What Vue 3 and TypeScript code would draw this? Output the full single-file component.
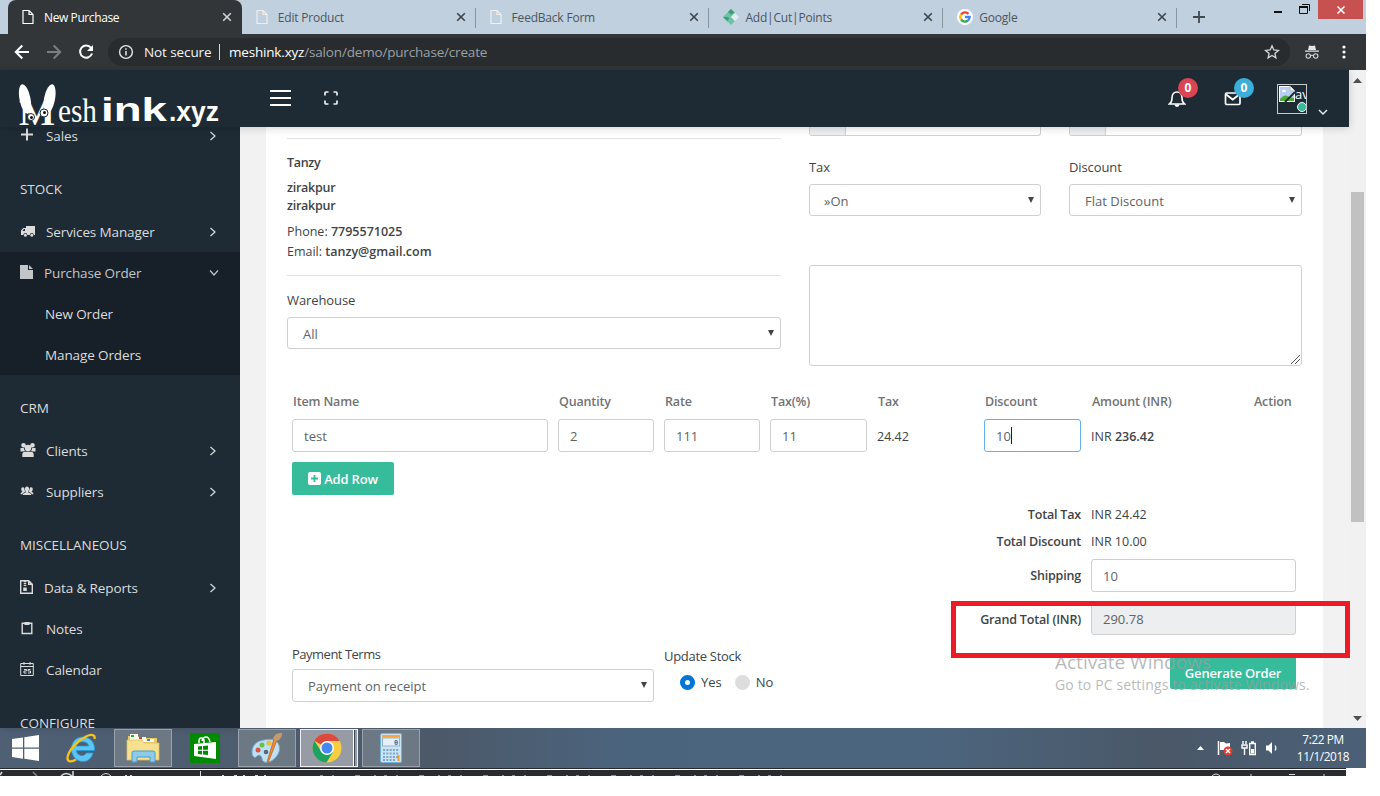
<script setup lang="ts">
import { computed, ref } from "vue";

interface Tab {
  title: string;
  icon: "page" | "diamond" | "google";
}

interface NavItem {
  label: string;
  icon: string;
  arrow?: boolean;
  tight?: boolean;
}

interface NavGroup {
  title: string;
  items: NavItem[];
}

const tabs: Tab[] = [
  { title: "New Purchase", icon: "page" },
  { title: "Edit Product", icon: "page" },
  { title: "FeedBack Form", icon: "page" },
  { title: "Add|Cut|Points", icon: "diamond" },
  { title: "Google", icon: "google" },
];

const stock: NavGroup = {
  title: "STOCK",
  items: [{ label: "Services Manager", icon: "truck", arrow: true }],
};

const groups: NavGroup[] = [
  {
    title: "CRM",
    items: [
      { label: "Clients", icon: "clients", arrow: true },
      { label: "Suppliers", icon: "suppliers", arrow: true },
    ],
  },
  {
    title: "MISCELLANEOUS",
    items: [
      { label: "Data & Reports", icon: "zip", arrow: true, tight: true },
      { label: "Notes", icon: "note" },
      { label: "Calendar", icon: "calendar" },
    ],
  },
  { title: "CONFIGURE", items: [] },
];

// Filled 16x16 glyphs of the side menu.
const glyphs: Record<string, string> = {
  plus: "M6 1.500h2v5h5v2H8v5H6v-5H1v-2h5z",
  truck:
    "M6 3h9v9h-1.200a2 2 0 0 0-4 0H7.400a2 2 0 0 0-4 0H1V7.600L3.300 5H6zM2.500 8H5V6H3.900zM5.400 10.800a1.500 1.500 0 1 1 0 3 1.500 1.500 0 0 1 0-3zm6.400 0a1.500 1.500 0 1 1 0 3 1.500 1.500 0 0 1 0-3z",
  file: "M0 1h8v5h5v9H0zM9 1l4 4H9z",
  clients:
    "M3.500 1a2.300 2.300 0 1 1 0 4.600 2.300 2.300 0 0 1 0-4.600zm9 0a2.300 2.300 0 1 1 0 4.600 2.300 2.300 0 0 1 0-4.600zM8 2.800A3.200 3.200 0 1 1 8 9.200 3.200 3.200 0 0 1 8 2.800zM.5 6h3.300c.1 1.300.6 2.300 1.300 3L3 9.400H.5zM12.200 6h3.300v3.400H13L11 9c.7-.7 1.100-1.700 1.200-3zM2.300 15v-2.500c0-1.700 1-2.800 2.700-2.800h6c1.700 0 2.700 1.100 2.700 2.800V15z",
  suppliers:
    "M7 3.500c1.300 0 2.100 1 2.100 2.400S8 8.500 8 9.200l3 1.500v1.300H3v-1.300l3-1.500c0-.7-1.100-1.800-1.100-3.300S5.700 3.500 7 3.500zM2.800 4.200c1 0 1.500.6 1.600 1.600 0 1.500.7 2.400 1 3L2.700 10.300v1H.7V9.800L2.500 9c-.5-.6-1.300-1.500-1.300-2.700S1.800 4.200 2.800 4.200zM11.200 4.200c-1 0-1.500.6-1.600 1.600 0 1.500-.7 2.400-1 3l2.700 1.500v1h2V9.800L11.500 9c.5-.6 1.300-1.500 1.300-2.700s-.6-2.100-1.600-2.100z",
};

const items = ref([{ name: "test", qty: 2, rate: 111, tax: 11, discount: 10 }]);
const shipping = ref(10);
const grandTotal = "290.78";

const taxOf = (i: { qty: number; rate: number; tax: number }) =>
  (i.qty * i.rate * i.tax) / 100;
const amountOf = (i: { qty: number; rate: number; tax: number; discount: number }) =>
  (i.qty * i.rate + taxOf(i) - i.discount).toFixed(2);

const totalTax = computed(() => items.value.reduce((s, i) => s + taxOf(i), 0).toFixed(2));
const totalDiscount = computed(() => items.value.reduce((s, i) => s + i.discount, 0).toFixed(2));
</script>

<template>
  <div class="screen">
    <!-- browser tabs -->
    <div class="tabstrip">
      <div v-for="(tab, i) in tabs" :key="tab.title" class="tab" :class="{ active: i === 0, divided: i > 0 }">
        <svg v-if="tab.icon === 'page'" class="tab-icon" width="16" height="16" viewBox="0 0 16 16">
          <path d="M1 1.500h6l4 4v9H1zM7 1.500v4h4" fill="none" :stroke="i === 0 ? '#fff' : '#f1efec'" stroke-width="1.200" />
        </svg>
        <svg v-else-if="tab.icon === 'diamond'" class="tab-icon" width="16" height="16" viewBox="0 0 16 16">
          <path d="M8 0l4 4-8 8-4-4z" fill="#6cc5a2" />
          <path d="M8 0l3.500 3.500-3.500 2L5 3z" fill="#3f9b7b" />
          <path d="M0 8h5l4 4-4 1z" fill="#3f9b7b" />
          <path d="M4 12l4-4 4 4-4 4z" fill="#6cc5a2" />
          <path d="M12 4l4 4-4 4-4-4z" fill="#e3ecf1" />
        </svg>
        <svg v-else class="tab-icon" width="16" height="16" viewBox="0 0 16 16">
          <circle cx="8" cy="8" r="8" fill="#fff" />
          <g fill="none" stroke-width="2.300">
            <path d="M4.100 5.500A4.700 4.700 0 0 1 11.500 4.900" stroke="#ea4335" />
            <path d="M4.100 5.500A4.700 4.700 0 0 0 4.100 10.500" stroke="#fbbc05" />
            <path d="M4.100 10.500A4.700 4.700 0 0 0 11 11.500" stroke="#34a853" />
            <path d="M11 11.500A4.600 4.600 0 0 0 12.700 8H8" stroke="#4285f4" />
          </g>
        </svg>
        <span class="tab-title">{{ tab.title }}</span>
        <svg class="tab-close" width="10" height="10" viewBox="0 0 10 10">
          <path d="M1.200 1.200l7.600 7.600M8.800 1.200L1.200 8.800" fill="none" stroke="currentColor" stroke-width="1.600" />
        </svg>
      </div>
      <div class="new-tab">
        <svg width="12" height="12" viewBox="0 0 12 12"><path d="M6 0v12M0 6h12" stroke="#42494f" stroke-width="1.800" /></svg>
      </div>
      <div class="win-buttons">
        <svg class="win-min" width="36" height="20" viewBox="0 0 36 20">
          <path d="M0 12h8" stroke="#111" stroke-width="2" />
          <path d="M25.500 7.500h8v6h-8zM28 4.500h7.500V11" fill="none" stroke="#111" />
          <path d="M25 7h9" stroke="#111" stroke-width="2" />
        </svg>
        <div class="win-close">
          <svg width="8" height="8" viewBox="0 0 8 8"><path d="M.5.500l7 7M7.500.500l-7 7" stroke="#fff" stroke-width="1.500" /></svg>
        </div>
      </div>
    </div>

    <!-- address bar -->
    <div class="toolbar">
      <svg class="tool" width="16" height="16" viewBox="0 0 16 16"><path d="M15 8H2M8.300 1.500L1.800 8l6.500 6.500" fill="none" stroke="#fff" stroke-width="2" /></svg>
      <svg class="tool" width="16" height="16" viewBox="0 0 16 16"><path d="M1 8h13M7.700 1.500L14.200 8l-6.500 6.500" fill="none" stroke="#7b7e81" stroke-width="2" /></svg>
      <svg class="tool" width="16" height="16" viewBox="0 0 16 16">
        <path d="M13 3.800A6.100 6.100 0 1 0 14 9.500" fill="none" stroke="#fff" stroke-width="2" />
        <path d="M15 1v6H9z" fill="#fff" />
      </svg>
      <div class="omnibox">
        <svg width="16" height="16" viewBox="0 0 16 16">
          <circle cx="8" cy="8" r="6.400" fill="none" stroke="#e6e8ea" stroke-width="1.400" />
          <path d="M8 7v4.500M8 4.300v1.500" stroke="#e6e8ea" stroke-width="1.500" />
        </svg>
        <span class="not-secure">Not secure</span>
        <span class="omni-sep"></span>
        <span class="url"><b>meshink.xyz</b>/salon/demo/purchase/create</span>
        <svg class="star" width="16" height="16" viewBox="0 0 16 16">
          <path d="M8 1.800l1.800 4.200 4.600.4-3.500 3 1 4.500L8 11.500l-3.900 2.400 1-4.500-3.500-3 4.600-.4z" fill="none" stroke="#d5d7d9" stroke-width="1.300" />
        </svg>
      </div>
      <svg class="incognito" width="14" height="14" viewBox="0 0 14 14">
        <path d="M4 .5l3 .5 3-.5L11 5H3zM0 5.500h14v1.300H0z" fill="#e3e5e6" />
        <g fill="none" stroke="#d4d6d8" stroke-width="1.100"><circle cx="3.300" cy="11" r="2.200" /><circle cx="10.700" cy="11" r="2.200" /><path d="M5.500 10.700q1.500-.9 3 0" /></g>
      </svg>
      <svg class="kebab" width="4" height="14" viewBox="0 0 4 14"><g fill="#fff"><circle cx="2" cy="2" r="1.600" /><circle cx="2" cy="7" r="1.600" /><circle cx="2" cy="12" r="1.600" /></g></svg>
    </div>

    <div class="viewport">
      <div class="page">
        <header class="navbar">
          <div class="brand">
            <svg width="205" height="48" viewBox="0 0 205 48">
              <g fill="#fff">
                <ellipse cx="7" cy="15" rx="5.500" ry="15" transform="rotate(-11 7 15)" />
                <ellipse cx="31.500" cy="15" rx="5.500" ry="15" transform="rotate(11 31.500 15)" />
                <text x="1" y="41" class="logo-m" textLength="36" lengthAdjust="spacingAndGlyphs">M</text>
                <text x="40" y="38" class="logo-esh" textLength="39" lengthAdjust="spacingAndGlyphs">esh</text>
                <text x="83" y="37" class="logo-ink" textLength="66" lengthAdjust="spacingAndGlyphs">ink</text>
                <text x="151" y="37" class="logo-xyz" textLength="50" lengthAdjust="spacingAndGlyphs">.xyz</text>
              </g>
              <circle cx="13" cy="33" r="3.500" fill="#fff" stroke="#1e2b35" /><circle cx="13.500" cy="33.500" r="1.500" fill="#111" />
              <circle cx="26" cy="29" r="4" fill="#fff" stroke="#1e2b35" /><circle cx="26.500" cy="28.500" r="1.500" fill="#111" />
            </svg>
          </div>
          <svg class="burger" width="21" height="16" viewBox="0 0 21 16"><path d="M0 1h21M0 8h21M0 15h21" stroke="#fff" stroke-width="2" /></svg>
          <svg class="expand" width="14" height="14" viewBox="0 0 14 14"><path d="M1 4.500V2q0-1 1-1h2.500M9.500 1H12q1 0 1 1v2.500M13 9.500V12q0 1-1 1H9.500M4.500 13H2q-1 0-1-1V9.500" fill="none" stroke="#eef0f1" stroke-width="1.700" /></svg>
          <div class="nav-right">
            <div class="notify">
              <svg width="18" height="18" viewBox="0 0 18 18">
                <path d="M1.500 14h15c-2-1.300-2.500-3-2.500-6 0-3.800-2-6-5-6S4 4.200 4 8c0 3-.5 4.700-2.500 6z" fill="none" stroke="#fff" stroke-width="1.600" />
                <path d="M6.500 14.500a2.500 2.500 0 0 0 5 0z" fill="#fff" />
              </svg>
              <span class="badge red">0</span>
            </div>
            <div class="notify">
              <svg width="18" height="18" viewBox="0 0 18 18">
                <rect x="1.500" y="3" width="14.500" height="11.500" rx="1.200" fill="none" stroke="#fff" stroke-width="1.700" />
                <path d="M1.500 4l7.200 5.500L16 4" fill="none" stroke="#fff" stroke-width="1.800" />
              </svg>
              <span class="badge blue">0</span>
            </div>
            <div class="avatar">
              <svg width="16" height="16" viewBox="0 0 16 16">
                <path d="M0 0h11l5 5v11H0z" fill="#fff" />
                <path d="M1 1h9.500v4.500H15V15H1z" fill="#b8cdf5" />
                <ellipse cx="5" cy="5" rx="2" ry="1.300" fill="#fff" />
                <path d="M1 15v-2q5-6 9-2l5 1v3z" fill="#4ea634" />
                <path d="M16 6L6 16" stroke="#1e2b35" stroke-width="2" />
                <path d="M11 0v5h5" fill="#fff" stroke="#888" stroke-width=".7" />
              </svg>
              <span>avatar</span>
              <i class="online"></i>
            </div>
            <svg class="chev" width="10" height="7" viewBox="0 0 10 7"><path d="M1 1l4 4 4-4" fill="none" stroke="#e5e7e9" stroke-width="1.500" /></svg>
          </div>
        </header>

        <div class="body">
          <nav class="sidebar">
            <div class="nav-list">
              <div class="nav-item">
                <svg class="nav-icon" width="16" height="16" viewBox="0 0 16 16"><path :d="glyphs.plus" /></svg>
                <span>Sales</span>
                <svg class="arrow" width="8" height="10" viewBox="0 0 8 10"><path d="M1.500 1l4.500 4-4.500 4" /></svg>
              </div>
              <div class="nav-head">{{ stock.title }}</div>
              <div v-for="item in stock.items" :key="item.label" class="nav-item">
                <svg class="nav-icon" width="16" height="16" viewBox="0 0 16 16"><path :d="glyphs[item.icon]" fill-rule="evenodd" /></svg>
                <span>{{ item.label }}</span>
                <svg class="arrow" width="8" height="10" viewBox="0 0 8 10"><path d="M1.500 1l4.500 4-4.500 4" /></svg>
              </div>
              <div class="open">
                <div class="nav-item dim tight">
                  <svg class="nav-icon" width="16" height="16" viewBox="0 0 16 16"><path :d="glyphs.file" /></svg>
                  <span>Purchase Order</span>
                  <svg class="arrow down" width="10" height="8" viewBox="0 0 10 8"><path d="M1 1.500l4 4.500 4-4.500" /></svg>
                </div>
                <div class="nav-item sub">New Order</div>
                <div class="nav-item sub">Manage Orders</div>
              </div>
              <template v-for="group in groups" :key="group.title">
                <div class="nav-head">{{ group.title }}</div>
                <div v-for="item in group.items" :key="item.label" class="nav-item" :class="{ tight: item.tight }">
                  <svg v-if="item.icon === 'zip'" class="nav-icon line" width="16" height="16" viewBox="0 0 16 16">
                    <path d="M.7 1.700h8L12.300 5.300v9H.7zM8.700 1.700v3.600h3.600" />
                    <path d="M5 2v5" stroke-width="2.500" stroke-dasharray="1.200 .8" /><path d="M5 8.500v3.500" stroke-width="3.500" />
                  </svg>
                  <svg v-else-if="item.icon === 'note'" class="nav-icon line" width="16" height="16" viewBox="0 0 16 16">
                    <path d="M2.200 3.300h9.600v10.200H2.200z" /><path d="M4.500 3.500h5" stroke-width="3" />
                  </svg>
                  <svg v-else-if="item.icon === 'calendar'" class="nav-icon line thin" width="16" height="16" viewBox="0 0 16 16">
                    <path d="M.7 2.500h12.600v12H.7zM.7 5.500h12.600M4 1v3M10 1v3M4 8.500h2.500v1.500H4v2h2.500M10.500 8.500H8V10h2.500v2H8" />
                  </svg>
                  <svg v-else class="nav-icon" width="16" height="16" viewBox="0 0 16 16"><path :d="glyphs[item.icon]" /></svg>
                  <span>{{ item.label }}</span>
                  <svg v-if="item.arrow" class="arrow" width="8" height="10" viewBox="0 0 8 10"><path d="M1.500 1l4.500 4-4.500 4" /></svg>
                </div>
              </template>
            </div>
          </nav>

          <main class="content">
            <div class="card">
              <div class="columns">
                <section class="left">
                  <hr />
                  <div class="client">
                    <p class="name">Tanzy</p>
                    <p class="addr">zirakpur<br />zirakpur</p>
                    <p class="contact">Phone: <b>7795571025</b><br />Email: <b>tanzy@gmail.com</b></p>
                  </div>
                  <hr />
                  <label class="warehouse">Warehouse</label>
                  <div class="control select">All<i></i></div>
                </section>
                <section class="right">
                  <div class="pair stubs">
                    <div class="input-group"><span></span></div>
                    <div class="input-group"><span></span></div>
                  </div>
                  <div class="pair">
                    <div><label>Tax</label><div class="control select tax">»On<i></i></div></div>
                    <div><label>Discount</label><div class="control select">Flat Discount<i></i></div></div>
                  </div>
                  <div class="note-box">
                    <svg width="9" height="9" viewBox="0 0 9 9"><path d="M0 9l9-9M4 9l5-5" stroke="#444" stroke-width=".9" /></svg>
                  </div>
                </section>
              </div>

              <div class="grid heads">
                <span>Item Name</span><span>Quantity</span><span>Rate</span><span>Tax(%)</span><span>Tax</span><span>Discount</span><span>Amount (INR)</span><span class="action">Action</span>
              </div>
              <div v-for="item in items" :key="item.name" class="grid row">
                <div class="control">{{ item.name }}</div>
                <div class="control">{{ item.qty }}</div>
                <div class="control">{{ item.rate }}</div>
                <div class="control">{{ item.tax }}</div>
                <span class="cell">{{ taxOf(item).toFixed(2) }}</span>
                <div class="control focus">{{ item.discount }}<i class="caret"></i></div>
                <span class="cell">INR <b>{{ amountOf(item) }}</b></span>
              </div>
              <button class="btn add">
                <svg width="13" height="13" viewBox="0 0 13 13"><rect width="13" height="13" rx="2" fill="#fff" /><path d="M6.500 3v7M3 6.500h7" stroke="#37bc9b" stroke-width="1.800" /></svg>
                Add Row
              </button>

              <div class="totals">
                <div class="total t1"><b>Total Tax</b><span>INR {{ totalTax }}</span></div>
                <div class="total t2"><b>Total Discount</b><span>INR {{ totalDiscount }}</span></div>
                <div class="total t3"><b>Shipping</b><div class="control">{{ shipping }}</div></div>
                <div class="total t4"><b>Grand Total (INR)</b><div class="control readonly">{{ grandTotal }}</div></div>
              </div>

              <div class="footer">
                <div class="terms">
                  <label>Payment Terms</label>
                  <div class="control select">Payment on receipt<i></i></div>
                </div>
                <div class="stock">
                  <label>Update Stock</label>
                  <div class="radios">
                    <span class="radio on"></span><span>Yes</span>
                    <span class="radio"></span><span>No</span>
                  </div>
                </div>
                <button class="btn generate">Generate Order</button>
              </div>
            </div>
          </main>
        </div>
      </div>
      <div class="scrollbar">
        <svg width="9" height="5" viewBox="0 0 9 5"><path d="M0 5l4.500-5L9 5z" fill="#505050" /></svg>
        <div class="thumb"></div>
        <svg width="9" height="5" viewBox="0 0 9 5"><path d="M0 0h9L4.500 5z" fill="#505050" /></svg>
      </div>
    </div>

    <!-- windows taskbar -->
    <div class="taskbar">
      <svg class="start" width="27" height="26" viewBox="0 0 27 26"><path d="M0 4l11-1.600v10H0zM12.300 2.200L27 0v12.400H12.300zM0 13.700h11v10L0 22zM12.300 13.700H27V26l-14.700-2.200z" fill="#fff" /></svg>
      <svg class="ie" width="30" height="30" viewBox="0 0 30 30">
        <path d="M27 20H20.500A5.500 5.500 0 0 1 10.300 17.500H28.500C29.300 9 23.500 4 17 4 9.500 4 5.500 9.500 5.500 16S10 28.500 17 28.500c5 0 8.500-3.200 10-8.500zM10.500 13C11 10.300 13.500 8.700 16.500 8.700S22.300 10.300 22.800 13z" fill="#5bc6f4" stroke="#279ad8" stroke-width=".8" />
        <path d="M28.500 6C29.500 2 26 .5 20 3.500 11 8 2 18 1.500 25c-.2 4 4 4.500 8.500 1.500" fill="none" stroke="#f7c417" stroke-width="2.300" />
      </svg>
      <div class="task explorer">
        <svg width="34" height="32" viewBox="0 0 34 32">
          <path d="M2 4h10l2 2h17v22H2z" fill="#e8ca68" /><path d="M4 2h8v3h8v2h8v3H4z" fill="#fbf8e9" />
          <path d="M5 3h3v2H5z" fill="#16b33c" /><path d="M13 5h3v2h-3z" fill="#d8432f" /><path d="M21 7h3v2h-3z" fill="#3385dd" />
          <path d="M1 8h15l2 3h15v17H1z" fill="#f6df8d" stroke="#dfbd5b" stroke-width=".7" />
          <path d="M6 30V21q0-2 2-2h19q2 0 2 2v9h-5v-5H11v5z" fill="#8ccbe9" stroke="#4d9cc8" />
        </svg>
      </div>
      <div class="store">
        <svg width="30" height="30" viewBox="0 0 30 30">
          <path d="M4 11l22-2v17L4 23z" fill="#fff" /><path d="M9 10V8q0-3 2.500-3T14 8v2M12 8q1-4 4-4t4 5" fill="none" stroke="#fff" stroke-width="1.500" />
          <path d="M8 13.500l4-.4v3.700H8zM13 13l5-.5v4.300h-5zM8 17.700h4v3.700l-4-.4zM13 17.700h5V22l-5-.5z" fill="#008a00" />
        </svg>
      </div>
      <div class="task paint">
        <svg width="32" height="32" viewBox="0 0 32 32">
          <path d="M13 8C5 9 1 14 1 20c0 5 3 7 5 4 2-2 5 0 5 3 1 5 8 4 12 0 7-6 7-14 2-18-3-2-8-2-12-1z" fill="#bce0f4" stroke="#73a9cd" />
          <circle cx="7" cy="18" r="2.500" fill="#e15246" /><circle cx="11" cy="13" r="2.500" fill="#6cbf45" /><circle cx="18" cy="11" r="2.500" fill="#f2b83a" /><circle cx="15" cy="20" r="2.300" fill="#55697c" />
          <path d="M26 8L17 31l-1-1 7-23z" fill="#ed8c35" stroke="#c2641e" stroke-width=".8" /><path d="M22 7q2-7 9-6 0 6-5 8z" fill="#c69b6c" />
        </svg>
      </div>
      <div class="task chrome">
        <svg width="30" height="30" viewBox="0 0 30 30">
          <circle cx="15" cy="15" r="14.500" fill="#f8cd3f" />
          <path d="M15 15L2.400 7.700A14.500 14.500 0 0 1 27.700 8H15z" fill="#dc4a3f" />
          <path d="M15 15l6 4-6.500 10.500A14.500 14.500 0 0 1 2.400 7.700L9 18z" fill="#1da261" />
          <circle cx="15" cy="15" r="7" fill="#fff" /><circle cx="15" cy="15" r="5.500" fill="#4688f1" />
        </svg>
      </div>
      <div class="task calc">
        <svg width="22" height="30" viewBox="0 0 22 30">
          <rect x=".5" y=".5" width="21" height="29" rx="1.500" fill="#cce5f6" stroke="#77b0d9" /><path d="M2 2h18v2.500H2z" fill="#f6a63b" />
          <rect x="2.500" y="5" width="17" height="8" fill="#e6f0fa" stroke="#91b5d0" /><text x="14" y="12" class="calc-zero">0</text>
          <path d="M3 17h16M3 20.500h16M3 24h16M3 27h12" stroke="#7ba6ca" stroke-width="2" stroke-dasharray="2 1.300" /><path d="M18.500 22v6" stroke="#f39b2d" stroke-width="2" />
        </svg>
      </div>
      <div class="tray">
        <svg width="7" height="4" viewBox="0 0 7 4"><path d="M0 4l3.500-4L7 4z" fill="#fff" /></svg>
        <svg width="16" height="16" viewBox="0 0 16 16">
          <path d="M1.500 1v14" stroke="#fff" stroke-width="1.500" /><path d="M3 2l4 0 2 1.500 4-.5v7H3z" fill="#fff" />
          <circle cx="11" cy="11" r="4.500" fill="#dd3f2d" /><path d="M9 9l4 4M13 9l-4 4" stroke="#fff" stroke-width="1.400" />
        </svg>
        <svg width="16" height="16" viewBox="0 0 16 16">
          <path d="M2 1v3M5 1v3M1 5h5v3H1zM3.500 8v7" fill="none" stroke="#fff" stroke-width="1.400" />
          <path d="M8.700 3.500h5.600v11H8.700zM10 2h3" fill="none" stroke="#fff" stroke-width="1.400" /><path d="M10 9h3v4.500h-3z" fill="#fff" />
        </svg>
        <svg width="16" height="16" viewBox="0 0 16 16"><path d="M1 5.500h2.500L7 2v12L3.500 10.500H1z" fill="#fff" /><path d="M10 5.500q1.800 2.500 0 5" fill="none" stroke="#fff" stroke-width="1.200" /></svg>
        <div class="clock">7:22 PM<br />11/1/2018</div>
      </div>
    </div>

    <!-- sliver of the window underneath -->
    <div class="under">
      <svg width="1346" height="6" viewBox="0 0 1346 6">
        <g fill="none" stroke="#d8dadb">
          <path d="M0 5l2-3" stroke-width="1.500" /><path d="M33 2l4 4" stroke="#85888a" stroke-width="1.500" />
          <path d="M61 6q5-5 11 0M73 1v5" stroke-width="1.500" /><path d="M101 6q5-5 10 0" />
          <path d="M200.500 1v5" /><path d="M125 5.500h7" stroke-dasharray="2 3" />
          <path d="M222 5.500h52" stroke-dasharray="2 10 3 6" /><path d="M320 5.500h480" stroke="#8b9196" stroke-dasharray="3 9 2 21 5 14 2 8" />
          <path d="M1212 6q4-4 8 0M1251 4v2M1289 4.500h6M1324 4v2" />
        </g>
      </svg>
    </div>

    <div class="watermark"><span>Activate Windows</span><small>Go to PC settings to activate Windows.</small></div>
    <div class="highlight"></div>
  </div>
</template>

<style>
body {
  margin: 0;
  background: #fff;
  overflow: hidden;
}
</style>

<style scoped>
.screen {
  position: relative;
  width: 1366px;
  height: 796px;
  font-family: "Open Sans", "Noto Sans", sans-serif;
  font-size: 13px;
  color: #404447;
}
.screen * {
  box-sizing: border-box;
}
svg {
  display: block;
  flex: none;
}
b {
  font-weight: 600;
}

/* tabs */
.tabstrip {
  display: flex;
  height: 34px;
  padding-left: 8px;
  background: #c0d0df;
}
.tab {
  display: flex;
  align-items: center;
  width: 233.800px;
  padding: 0 10px 0 14px;
  font-size: 12px;
  letter-spacing: -0.2px;
  color: #4d555c;
}
.tab.active {
  background: #323639;
  color: #fff;
  border-radius: 8px 8px 0 0;
  letter-spacing: -0.4px;
}
.tab.divided {
  background: linear-gradient(#8895a1, #8895a1) right 8px / 1px 20px no-repeat;
}
.tab-icon {
  margin-right: 6px;
}
.tab-title {
  flex: 1;
}
.tab-close {
  color: #3c4349;
}
.active .tab-close {
  color: #d3d5d7;
}
.new-tab {
  display: flex;
  align-items: center;
  padding-left: 16px;
}
.win-buttons {
  display: flex;
  margin-left: auto;
  padding-right: 3px;
}
.win-min {
  margin-right: 8px;
}
.win-close {
  display: flex;
  align-items: center;
  justify-content: center;
  width: 45px;
  height: 19px;
  background: #c75050;
}

/* address bar */
.toolbar {
  display: flex;
  align-items: center;
  height: 36px;
  padding-left: 14px;
  background: #323639;
}
.tool {
  margin-right: 16px;
}
.omnibox {
  display: flex;
  align-items: center;
  width: 1182px;
  height: 28px;
  margin-left: -2px;
  padding: 0 10px;
  border-radius: 14px;
  background: #282c2f;
}
.not-secure {
  margin: 0 8px 0 10px;
  font-size: 13.500px;
  letter-spacing: -0.1px;
  color: #f1f3f4;
}
.omni-sep {
  width: 1px;
  height: 16px;
  background: #d5d7d9;
}
.url {
  margin-left: 8.500px;
  font-size: 13.500px;
  letter-spacing: -0.18px;
  color: #9aa0a6;
}
.url b {
  font-weight: 400;
  color: #fff;
}
.star {
  margin-left: auto;
}
.incognito {
  margin-left: 15px;
}
.kebab {
  margin-left: 23px;
}

/* page */
.viewport {
  display: flex;
  height: 658px;
}
.page {
  width: 1349px;
  display: flex;
  flex-direction: column;
}
.navbar {
  position: relative;
  z-index: 2;
  display: flex;
  align-items: flex-start;
  height: 57px;
  background: #1e2b35;
  box-shadow: 0 1px 8px rgba(0, 0, 0, 0.18);
}
.brand {
  width: 270px;
  padding: 14px 0 0 18px;
}
.logo-m {
  font: bold 36px "Liberation Serif", serif;
}
.logo-esh {
  font: 33px "Liberation Serif", serif;
}
.logo-ink {
  font: bold 34px "Liberation Sans", sans-serif;
}
.logo-xyz {
  font: bold 28px "Liberation Sans", sans-serif;
}
.burger {
  margin-top: 20px;
}
.expand {
  margin: 21px 0 0 33px;
}
.nav-right {
  display: flex;
  margin-left: auto;
}
.notify {
  position: relative;
  width: 56px;
  padding-top: 20px;
}
.badge {
  position: absolute;
  left: 10px;
  top: 8px;
  width: 20px;
  height: 20px;
  border-radius: 50%;
  font-size: 12px;
  font-weight: 700;
  line-height: 20px;
  text-align: center;
  color: #fff;
}
.red {
  background: #da4453;
}
.blue {
  background: #3bafda;
}
.avatar {
  position: relative;
  display: flex;
  width: 30px;
  height: 30px;
  margin: 14px 11px 0 -3px;
  padding: 1px;
  border: 1px solid #c6cacd;
  overflow: hidden;
  line-height: 16px;
  color: #fff;
}
.online {
  position: absolute;
  right: -1px;
  bottom: 1px;
  width: 10px;
  height: 10px;
  border: 1px solid #fff;
  border-radius: 50%;
  background: #37bc9b;
}
.chev {
  margin: 39px 21px 0 0;
}
.body {
  display: flex;
  height: 601px;
}

/* side menu */
.sidebar {
  width: 240px;
  overflow: hidden;
  background: #1e2b35;
  color: #dcdcdc;
  box-shadow: 1px 0 8px rgba(0, 0, 0, 0.18);
  font-size: 13.500px;
  letter-spacing: -0.12px;
}
.nav-list {
  margin-top: -12px;
}
.nav-item {
  display: flex;
  align-items: center;
  height: 41px;
  padding: 0 22px 0 20px;
}
.nav-item.tight .nav-icon {
  margin-right: 8px;
}
.nav-item.sub {
  padding-left: 45px;
}
.nav-item.dim {
  color: #c3c6c8;
}
.nav-icon {
  margin: 0 10px 2px 0;
  fill: currentColor;
}
.nav-icon.line {
  fill: none;
  stroke: currentColor;
  stroke-width: 1.400;
}
.nav-icon.thin {
  stroke-width: 1;
}
.arrow {
  margin-left: auto;
  fill: none;
  stroke: currentColor;
  stroke-width: 1.200;
}
.arrow:not(.down) {
  margin-right: 1px;
}
.arrow.down {
  margin-right: -1px;
}
.open {
  background: #172028;
}
.nav-head {
  height: 55px;
  padding: 24px 0 0 20px;
  font-size: 13.500px;
  line-height: 18px;
  letter-spacing: -0.05px;
}

/* form card */
.content {
  width: 1109px;
  padding: 0 26px;
  background: #f2f2f2;
}
.card {
  height: 601px;
  padding: 0 21px;
  background: #fff;
}
.columns {
  display: flex;
  gap: 28px;
  height: 262px;
}
.left {
  width: 494px;
  padding-top: 11px;
}
hr {
  margin: 0;
  border: 0;
  border-top: 1px solid #e3e3e3;
}
.client {
  height: 136px;
  padding-top: 14px;
  font-size: 12.500px;
}
.client p {
  margin: 0;
}
.name {
  font-weight: 600;
  line-height: 20px;
  letter-spacing: -0.3px;
}
.client .addr {
  margin-top: 6px;
  font-weight: 600;
  line-height: 18px;
  letter-spacing: -0.25px;
}
.client .contact {
  margin-top: 7px;
  line-height: 20px;
}
label {
  display: block;
  line-height: 18px;
  letter-spacing: -0.1px;
}
.warehouse {
  margin: 15px 0 8px;
}
.control {
  position: relative;
  display: flex;
  align-items: center;
  height: 33px;
  padding: 0 11px;
  border: 1px solid #d0d0d0;
  border-radius: 3px;
  background: #fff;
  color: #606468;
}
.select {
  height: 32px;
  padding: 2px 6px 0 15px;
}
.select i {
  margin: -3px 0 0 auto;
  border: 3.500px solid transparent;
  border-top: 6px solid #444;
  border-bottom: 0;
}
.select.tax {
  padding-left: 14px;
}
.right {
  width: 493px;
}
.pair {
  display: grid;
  grid-template-columns: 232px 233px;
  gap: 28px;
}
.stubs {
  height: 9px;
  margin-bottom: 22px;
}
.input-group {
  height: 9px;
  border: 1px solid #d0d0d0;
  border-top: 0;
  border-radius: 0 0 3px 3px;
}
.input-group span {
  display: block;
  width: 36px;
  height: 8px;
  border-right: 1px solid #d0d0d0;
  background: #eceeef;
}
.pair label {
  margin-bottom: 8px;
}
.note-box {
  display: flex;
  align-items: flex-end;
  justify-content: flex-end;
  height: 101px;
  margin-top: 49px;
  padding: 1px;
  border: 1px solid #d0d0d0;
  border-radius: 3px;
}
.grid {
  display: grid;
  grid-template-columns: 256px 96px 96px 97px 97px 97px 152px 43px;
  column-gap: 10px;
  padding-left: 5px;
}
.heads {
  height: 30px;
  font-size: 12.500px;
  font-weight: 600;
  line-height: 25px;
  letter-spacing: -0.15px;
  color: #707376;
}
.heads span {
  padding-left: 1px;
}
.action {
  white-space: nowrap;
}
.cell {
  font-size: 12.500px;
  line-height: 35px;
}
.control.focus {
  border-color: #66afe9;
}
.caret {
  width: 1px;
  height: 17px;
  background: #222;
}
.btn {
  display: flex;
  align-items: center;
  justify-content: center;
  gap: 3px;
  height: 33px;
  padding: 0;
  border: 0;
  border-radius: 2px;
  background: #37bc9b;
  color: #fff;
  font: 600 13px "Open Sans", sans-serif;
  letter-spacing: -0.18px;
}
.add {
  width: 102px;
  margin: 10px 0 0 5px;
}
.row {
  height: 33px;
}
.totals {
  height: 143px;
  padding-top: 6px;
}
.total {
  display: grid;
  grid-template-columns: 794px 205px;
  column-gap: 10px;
  align-items: center;
  height: 27px;
  font-size: 12.500px;
}
.total > b {
  letter-spacing: -0.18px;
  text-align: right;
}
.total .control {
  font-size: 13px;
}
.t3 {
  height: 33px;
  margin-top: 4px;
}
.t4 {
  height: 32px;
  margin-top: 11px;
}
.control.readonly {
  height: 32px;
  background: #eceeef;
}
.footer {
  display: flex;
  padding: 7px 6px 0 5px;
}
.terms {
  width: 362px;
}
.terms label {
  margin-bottom: 6px;
  letter-spacing: -0.5px;
}
.terms .select {
  height: 33px;
  padding-top: 1px;
}
.stock {
  margin-left: 10px;
  padding-top: 2px;
}
.stock label {
  letter-spacing: -0.3px;
}
.radios {
  display: flex;
  align-items: center;
  height: 16px;
  margin: 9px 0 0 16px;
}
.radio {
  width: 15px;
  height: 15px;
  margin-right: 6px;
  border-radius: 50%;
  background: #ddd;
}
.radio.on {
  border: 5px solid #0275d8;
  background: #fff;
}
.radio:not(.on) {
  margin-left: 13px;
}
.generate {
  width: 126px;
  margin: 11px 0 0 auto;
}
.scrollbar {
  display: flex;
  flex-direction: column;
  align-items: center;
  width: 17px;
  padding: 8px 0 7px;
  background: #f1f1f1;
}
.thumb {
  width: 13px;
  height: 330px;
  margin: 109px 0 auto;
  background: #c1c1c1;
}

/* taskbar */
.taskbar {
  display: flex;
  align-items: center;
  height: 40px;
  background: linear-gradient(90deg, #4f6075 0%, #4c5969 32%, #4b647e 46%, #4c657e 68%, #4a5868 85%, #4b6078 100%);
}
.start {
  margin-left: 12px;
}
.ie {
  margin-left: 27px;
}
.task {
  display: flex;
  align-items: center;
  justify-content: center;
  width: 58px;
  height: 38px;
  border: 1px solid #98a1ac;
  background: #6d7885;
}
.explorer {
  margin-left: 18px;
}
.store {
  margin: 0 18px;
  background: #008a00;
}
.chrome {
  width: 58px;
  margin: 0 4px;
  padding-right: 5px;
  border-color: #eef0f2;
  background: linear-gradient(90deg, #969ba5 52px, #fff 52px, #fff 53px, #3b4656 53px, #3b4656 54px, #969ba5 54px);
}
.tray {
  display: flex;
  align-items: center;
  gap: 8px;
  margin-left: auto;
  padding-right: 16px;
}
.tray > svg:first-child {
  margin-right: 5px;
}
.clock {
  width: 54px;
  margin-left: 7px;
  font-size: 11.800px;
  line-height: 17px;
  letter-spacing: -0.4px;
  text-align: center;
  color: #fff;
}
.calc-zero {
  font: bold 7px "Liberation Mono", monospace;
  fill: #335c88;
}
.under {
  width: 1346px;
  height: 8px;
  border-top: 1px solid #252a30;
  background: linear-gradient(#fff 1px, #292c2f 1px);
  padding-top: 1px;
}

/* overlays */
.watermark {
  position: absolute;
  z-index: 3;
  left: 1055px;
  top: 649px;
  color: rgba(155, 158, 160, 0.72);
  white-space: nowrap;
}
.watermark span,
.watermark small {
  display: block;
}
.watermark span {
  font-size: 19px;
  line-height: 27px;
}
.watermark small {
  font-size: 14px;
  line-height: 18px;
  letter-spacing: 0.14px;
}
.highlight {
  position: absolute;
  z-index: 4;
  left: 951px;
  top: 601px;
  width: 399px;
  height: 57px;
  border: 5px solid #ed1c24;
}
</style>
